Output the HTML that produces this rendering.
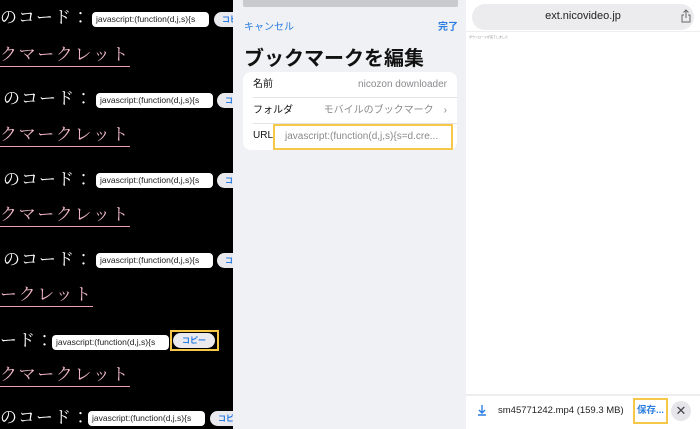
<!DOCTYPE html>
<html><head><meta charset="utf-8"><style>
*{margin:0;padding:0;box-sizing:border-box}
body{width:700px;height:429px;overflow:hidden;position:relative;background:#fff;font-family:"Liberation Sans","Noto Sans CJK JP",sans-serif}
.a{position:absolute;white-space:nowrap}
#L{position:absolute;left:0;top:0;width:233px;height:429px;background:#000;overflow:hidden}
.jp{font-family:"Liberation Serif","Noto Serif CJK JP",serif;color:#fff;font-size:17px;letter-spacing:1px;line-height:22px}
.lk{font-family:"Liberation Serif","Noto Serif CJK JP",serif;color:#f0b8c8;font-size:17px;letter-spacing:1.6px;border-bottom:1.5px solid #e8a0b0;line-height:22px}
.inp{background:#fff;border-radius:4px;font-size:8.5px;color:#222;height:15px;line-height:15px;padding:0 4px;width:117px;overflow:hidden}
.btn{background:#e9e9ee;border-radius:8px;height:15px;width:50px;color:#2a7de1;font-size:8px;font-weight:bold;line-height:15px;padding-left:8px}
#M{position:absolute;left:233px;top:0;width:233px;height:429px;background:#f0f1f4}
.row{position:absolute;left:10px;font-size:10px;color:#111;line-height:12px}
.rv{position:absolute;right:10px;font-size:10px;color:#8a8a8e;line-height:12px}
</style></head><body>
<div id="L">
<div class="a jp" style="left:0;top:7px">のコード：</div>
<div class="a inp" style="left:92px;top:12px">javascript:(function(d,j,s){s</div>
<div class="a btn" style="left:214px;top:12px">コピー</div>
<div class="a lk" style="left:0;top:44px">クマークレット</div>

<div class="a jp" style="left:3px;top:88px">のコード：</div>
<div class="a inp" style="left:96px;top:93px">javascript:(function(d,j,s){s</div>
<div class="a btn" style="left:217px;top:93px">コピー</div>
<div class="a lk" style="left:0;top:124px">クマークレット</div>

<div class="a jp" style="left:3px;top:169px">のコード：</div>
<div class="a inp" style="left:96px;top:173px">javascript:(function(d,j,s){s</div>
<div class="a btn" style="left:217px;top:173px">コピー</div>
<div class="a lk" style="left:0;top:204px">クマークレット</div>

<div class="a jp" style="left:3px;top:249px">のコード：</div>
<div class="a inp" style="left:96px;top:253px">javascript:(function(d,j,s){s</div>
<div class="a btn" style="left:217px;top:253px">コピー</div>
<div class="a lk" style="left:0;top:284px">ークレット</div>

<div class="a jp" style="left:0;top:330px">ード：</div>
<div class="a inp" style="left:52px;top:335px">javascript:(function(d,j,s){s</div>
<div class="a" style="left:170px;top:330px;width:49px;height:21px;border:2px solid #f5c84a"></div>
<div class="a btn" style="left:173px;top:333px;width:42px;padding-left:9px">コピー</div>
<div class="a lk" style="left:0;top:364px">クマークレット</div>

<div class="a jp" style="left:0;top:407px">のコード：</div>
<div class="a inp" style="left:88px;top:411px">javascript:(function(d,j,s){s</div>
<div class="a btn" style="left:210px;top:411px">コピー</div>
</div>

<div id="M">
<div class="a" style="left:10px;top:0;width:215px;height:10px;background:#c9cacd;border-radius:0 0 6px 6px"></div>
<div class="a" style="left:0;top:7px;width:233px;height:422px;background:#f0f1f4;border-radius:8px 8px 0 0"></div>
<div class="a" style="left:11px;top:18px;font-size:10px;color:#2a7de1">キャンセル</div>
<div class="a" style="left:205px;top:18px;font-size:10px;color:#2a7de1;font-weight:bold">完了</div>
<div class="a" style="left:11px;top:42px;font-size:20px;font-weight:bold;color:#111">ブックマークを編集</div>
<div class="a" style="left:10px;top:72px;width:214px;height:78px;background:#fff;border-radius:8px">
 <div class="row" style="top:7px">名前</div><div class="rv" style="top:7px">nicozon downloader</div>
 <div class="a" style="left:10px;top:25px;right:0;height:1px;background:#e3e3e6"></div>
 <div class="row" style="top:33px">フォルダ</div><div class="rv" style="top:33px">モバイルのブックマーク　›</div>
 <div class="a" style="left:10px;top:51px;right:0;height:1px;background:#e3e3e6"></div>
 <div class="row" style="top:58px">URL</div>
</div>
<div class="a" style="left:40px;top:124px;width:180px;height:26px;border:2px solid #f5c84a;background:#fff;font-size:10px;color:#8a8a8e;line-height:22px;padding-left:10px;overflow:hidden">javascript:(function(d,j,s){s=d.cre...</div>
</div>

<div class="a" style="left:472px;top:4px;width:222px;height:26px;background:#ececef;border-radius:13px"></div>
<div class="a" style="left:466px;top:10px;width:234px;text-align:center;font-size:11px;color:#222">ext.nicovideo.jp</div>
<svg class="a" style="left:680px;top:9px" width="12" height="14" viewBox="0 0 12 14"><path d="M6 1v8M3.5 3.5L6 1l2.5 2.5M4 6H2v7h8V6H8" fill="none" stroke="#666" stroke-width="1"/></svg>
<div class="a" style="left:466px;top:31px;width:234px;height:1px;background:#eee"></div>
<div class="a" style="left:469px;top:35px;font-size:3px;color:#888">ダウンロードが完了しました</div>
<div class="a" style="left:466px;top:394px;width:234px;height:2px;background:#eeeef0"></div>
<svg class="a" style="left:477px;top:404px" width="10" height="12" viewBox="0 0 10 12"><path d="M5 1v8M2 6l3 3 3-3M1 11h8" fill="none" stroke="#2a7de1" stroke-width="1.4"/></svg>
<div class="a" style="left:498px;top:405px;font-size:9.5px;color:#222">sm45771242.mp4 (159.3 MB)</div>
<div class="a" style="left:633px;top:398px;width:35px;height:26px;border:2px solid #f5c84a;font-size:9.5px;color:#2a7de1;font-weight:bold;line-height:22px;text-align:center">保存...</div>
<div class="a" style="left:671px;top:401px;width:20px;height:20px;border-radius:50%;background:#e6e6ea;color:#444;font-size:13px;line-height:20px;text-align:center">✕</div>
</body></html>
